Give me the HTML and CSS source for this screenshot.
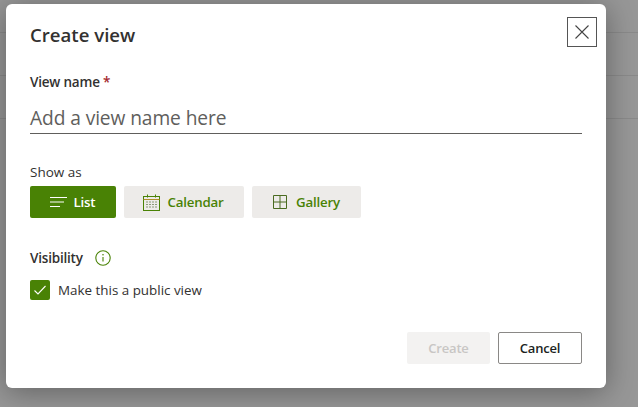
FILE: index.html
```html
<!DOCTYPE html>
<html lang="en">
<head>
<meta charset="utf-8">
<title>Create view</title>
<link rel="stylesheet" href="styles.css">
</head>
<body>
<div class="backdrop">
  <div class="bg-row"></div>
  <div class="bg-row"></div>
  <div class="bg-row"></div>
</div>
<div class="dialog">
  <h1 class="title">Create view</h1>
  <button class="close" aria-label="Close">
    <svg width="14" height="14" viewBox="0 0 14 14"><path d="M.5 .5l13 13M13.500 .5l-13 13" stroke="#444" stroke-width="1.100" fill="none"/></svg>
  </button>
  <label class="label name-label">View name <span class="req">*</span></label>
  <div class="input">Add a view name here</div>
  <div class="label show-label">Show as</div>
  <div class="choices">
    <button class="choice active list">
      <svg width="17" height="12" viewBox="0 0 17 12"><path d="M0 1.500h17M0 6h14M0 10.500h10" stroke="#fff" stroke-width="1" fill="none"/></svg>
      List
    </button>
    <button class="choice cal">
      <svg width="17" height="17" viewBox="0 0 17 17"><rect x=".5" y="2.500" width="16" height="14" fill="none" stroke="#498205"/><path d="M.5 5.500h16" stroke="#b0902a" fill="none"/><path d="M4.500 .5v3M12.500 .5v3" stroke="#498205"/><path d="M3 8h2M6 8h2M9 8h2M12 8h2M3 10.500h2M6 10.500h2M9 10.500h2M12 10.500h2M3 13h2M6 13h2M9 13h2M12 13h2" stroke="#8a9a78" stroke-width="1.200"/></svg>
      Calendar
    </button>
    <button class="choice gal">
      <svg width="14" height="14" viewBox="0 0 14 14"><path d="M.5 .5h13v13H.5zM7 .5v13M.5 7h13" fill="none" stroke="#4a6b20"/></svg>
      Gallery
    </button>
  </div>
  <div class="vis-row">
    <span class="label">Visibility</span>
    <svg class="info" width="16" height="16" viewBox="0 0 16 16"><circle cx="8" cy="8" r="7.200" fill="none" stroke="#498205" stroke-width="1.100"/><path d="M8 7v4.500" stroke="#498205" stroke-width="1.100"/><circle cx="8" cy="4.800" r=".8" fill="#498205"/></svg>
  </div>
  <div class="check-row">
    <span class="box"><svg width="14" height="12" viewBox="0 0 14 12"><path d="M1.500 6.500l3.500 3.500 7.500-8" fill="none" stroke="#fff" stroke-width="1.100"/></svg></span>
    <span class="check-text">Make this a public view</span>
  </div>
  <div class="footer">
    <button class="btn disabled">Create</button>
    <button class="btn cancel">Cancel</button>
  </div>
</div>
</body>
</html>
```
FILE: styles.css
```css
* { box-sizing: border-box; }
html, body { margin: 0; height: 100%; overflow: hidden; }
body {
  width: 638px;
  height: 407px;
  background: #979797;
  font-family: "Open Sans", "Noto Sans", sans-serif;
  color: #323130;
  position: relative;
}
.backdrop { padding-top: 32px; display: flex; flex-direction: column; gap: 42px; }
.bg-row { height: 1px; background: #8a8a8a; }
.dialog {
  position: absolute;
  left: 6px;
  top: 4px;
  width: 600px;
  height: 384px;
  background: #fff;
  border-radius: 6px;
  padding: 0 24px;
  box-shadow: 0 4px 30px rgba(0, 0, 0, .36);
  display: flex;
  flex-direction: column;
}
.title { margin: 18px 0 0; font-size: 18.600px; line-height: 26px; font-weight: 600; color: #323130; }
.close {
  position: absolute;
  left: 561px;
  top: 13px;
  width: 30px;
  height: 30px;
  padding: 0;
  background: #fff;
  border: 1px solid #555;
  display: flex;
  align-items: center;
  justify-content: center;
}
.label { font-size: 13.500px; font-weight: 600; line-height: 18px; color: #323130; letter-spacing: -.2px; }
.name-label { margin-top: 25px; }
.req { color: #a4262c; }
.input {
  margin-top: 8px;
  height: 35px;
  padding-top: 4px;
  width: 552px;
  border-bottom: 1px solid #605e5c;
  font-size: 19.200px;
  line-height: 29px;
  color: #605e5c;
  letter-spacing: -.1px;
}
.show-label { margin-top: 29px; font-weight: 500; letter-spacing: 0; }
.choices { display: flex; gap: 8px; margin-top: 5px; }
.choice {
  height: 32px;
  border: 0;
  border-radius: 2px;
  background: #edebe9;
  color: #498205;
  font: 600 13.300px "Open Sans", sans-serif;
  letter-spacing: -.2px;
  display: flex;
  align-items: center;
  justify-content: center;
  gap: 7px;
  padding: 0;
}
.list { width: 86px; background: #498205; color: #fff; padding-right: 1px; }
.cal { width: 120px; padding-right: 1px; }
.gal { width: 109px; gap: 9px; }
.vis-row { display: flex; align-items: center; gap: 12px; margin-top: 31px; }
.check-row { display: flex; align-items: center; gap: 8px; margin-top: 13px; }
.box {
  width: 20px;
  height: 20px;
  border-radius: 2px;
  background: #498205;
  display: flex;
  align-items: center;
  justify-content: center;
}
.check-text { font-size: 13.400px; line-height: 20px; color: #323130; letter-spacing: 0; }
.footer { display: flex; justify-content: flex-end; gap: 8px; margin-top: 32px; }
.btn {
  height: 32px;
  border-radius: 2px;
  font: 600 13px "Open Sans", sans-serif;
  letter-spacing: -.2px;
  padding: 0;
}
.disabled { width: 83px; background: #f3f2f1; border: 0; color: #c8c6c4; }
.cancel { width: 84px; background: #fff; border: 1px solid #8a8886; color: #201f1e; }
```
